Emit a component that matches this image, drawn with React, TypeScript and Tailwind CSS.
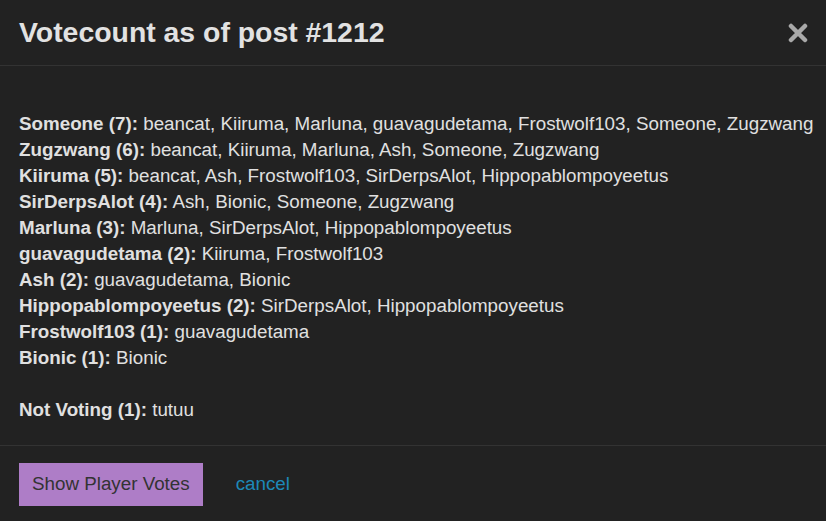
import React from "react";

const rows: [string, string][] = [
  ["Someone (7):", "beancat, Kiiruma, Marluna, guavagudetama, Frostwolf103, Someone, Zugzwang"],
  ["Zugzwang (6):", "beancat, Kiiruma, Marluna, Ash, Someone, Zugzwang"],
  ["Kiiruma (5):", "beancat, Ash, Frostwolf103, SirDerpsAlot, Hippopablompoyeetus"],
  ["SirDerpsAlot (4):", "Ash, Bionic, Someone, Zugzwang"],
  ["Marluna (3):", "Marluna, SirDerpsAlot, Hippopablompoyeetus"],
  ["guavagudetama (2):", "Kiiruma, Frostwolf103"],
  ["Ash (2):", "guavagudetama, Bionic"],
  ["Hippopablompoyeetus (2):", "SirDerpsAlot, Hippopablompoyeetus"],
  ["Frostwolf103 (1):", "guavagudetama"],
  ["Bionic (1):", "Bionic"],
];

export default function App() {
  return (
    <div
      className="w-[826px] h-[521px] bg-[#222222] text-[#e0e0e0] overflow-hidden flex flex-col"
      style={{ fontFamily: '"Liberation Sans", Arial, sans-serif' }}
    >
      <div className="h-[66px] flex items-center justify-between pl-[19px] pr-[18px] border-b border-[#333333] shrink-0">
        <h1 className="text-[28.4px] font-bold text-[#e2e2e2] leading-none">Votecount as of post #1212</h1>
        <svg width="20" height="20" viewBox="0 0 20 20" className="mt-[1px]">
          <path d="M3 3 L17 17 M17 3 L3 17" stroke="#a9a9a9" strokeWidth="4.5" strokeLinecap="round" />
        </svg>
      </div>
      <div className="pt-[45px] pb-[22px] px-[19px] text-[18.8px] leading-[26px] border-b border-[#333333] shrink-0">
        {rows.map(([a, b]) => (
          <div key={a} className="whitespace-nowrap">
            <span className="font-bold">{a}</span> {b}
          </div>
        ))}
        <div className="h-[26px]" />
        <div>
          <span className="font-bold">Not Voting (1):</span> tutuu
        </div>
      </div>
      <div className="flex items-center pl-[19px] pt-[17px]">
        <button className="h-[43px] px-[13px] bg-[#ae7dc7] text-[#333333] text-[18.8px]">Show Player Votes</button>
        <span className="ml-[33px] text-[18.8px] text-[#1d89b8]">cancel</span>
      </div>
    </div>
  );
}
